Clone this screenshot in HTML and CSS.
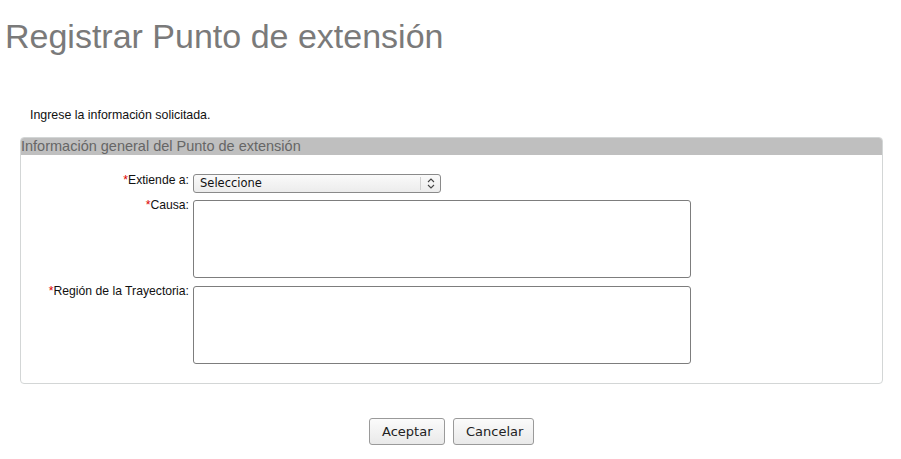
FILE: index.html
```html
<!DOCTYPE html>
<html lang="es">
<head>
<meta charset="utf-8">
<title>Registrar Punto de extensión</title>
<link rel="stylesheet" href="styles.css">
</head>
<body>
<div class="page">
  <h1 class="title">Registrar Punto de extensión</h1>
  <p class="intro">Ingrese la información solicitada.</p>
  <section class="panel">
    <div class="panel-head">Información general del Punto de extensión</div>
    <div class="form-grid">
      <label class="lbl lbl-select"><span class="req">*</span>Extiende a:</label>
      <div class="select">
        <span class="select-text">Seleccione</span>
        <span class="select-arrow">
          <svg width="8" height="11" viewBox="0 0 8 11"><path d="M1 4 L4 1 L7 4 M1 7 L4 10 L7 7" fill="none" stroke="#444" stroke-width="1.1"/></svg>
        </span>
      </div>
      <label class="lbl"><span class="req">*</span>Causa:</label>
      <textarea class="area"></textarea>
      <label class="lbl"><span class="req">*</span>Región de la Trayectoria:</label>
      <textarea class="area"></textarea>
    </div>
  </section>
  <div class="actions">
    <button class="btn" type="button">Aceptar</button>
    <button class="btn" type="button">Cancelar</button>
  </div>
</div>
</body>
</html>
```

FILE: styles.css
```css
html, body {
  margin: 0;
  padding: 0;
  background: #fff;
}
.page {
  padding: 0 18px 0 20px;
  font-family: "Liberation Sans", Arial, sans-serif;
}
.title {
  margin: 16px 0 0 -15px;
  font-size: 34px;
  font-weight: normal;
  line-height: 40px;
  color: #7a7a7a;
}
.intro {
  margin: 52px 0 0 10px;
  font-size: 12.4px;
  line-height: 14px;
  color: #111;
}
.panel {
  margin-top: 15px;
  border: 1px solid #d3d6d6;
  border-radius: 4px;
  height: 247px;
  box-sizing: border-box;
}
.panel-head {
  background: #bfbfbf;
  height: 17px;
  line-height: 17px;
  font-size: 14.5px;
  color: #666;
  padding-left: 0;
  border-radius: 3px 3px 0 0;
  white-space: nowrap;
}
.form-grid {
  display: grid;
  grid-template-columns: 168px 498px;
  column-gap: 4px;
  row-gap: 8px;
  margin-top: 18px;
}
.lbl {
  font-size: 12.2px;
  line-height: 14px;
  color: #111;
  text-align: right;
  margin-top: -2px;
  white-space: nowrap;
}
.lbl-select {
  margin-top: 0;
}
.req {
  color: #d00;
}
.select {
  position: relative;
  width: 248px;
  height: 19px;
  margin-top: 1px;
  margin-bottom: -1px;
  box-sizing: border-box;
  border: 1px solid #8a8a8a;
  border-radius: 3px;
  background: linear-gradient(#fafafa, #ececec);
  font-family: "DejaVu Sans", sans-serif;
  font-size: 11.5px;
  line-height: 17px;
  color: #111;
  padding-left: 6px;
}
.select-arrow {
  position: absolute;
  right: 0;
  top: 2px;
  width: 19px;
  height: 13px;
  border-left: 1px solid #d0d0d0;
  display: flex;
  align-items: center;
  justify-content: center;
}
.area {
  display: block;
  width: 498px;
  height: 78px;
  box-sizing: border-box;
  margin: 0;
  border: 1px solid #7d7d7d;
  border-radius: 3px;
  background: #fff;
  resize: none;
}
.actions {
  display: flex;
  justify-content: center;
  gap: 8px;
  margin-top: 34px;
  padding-right: 0;
}
.btn {
  height: 27px;
  box-sizing: border-box;
  padding: 0 12px;
  border: 1px solid #9a9a9a;
  border-radius: 3px;
  background: linear-gradient(#fbfbfb, #e9e9e9);
  font-family: "DejaVu Sans", sans-serif;
  font-size: 13px;
  color: #222;
}
.btn:first-child { width: 76px; }
.btn:last-child { width: 81px; }
```
